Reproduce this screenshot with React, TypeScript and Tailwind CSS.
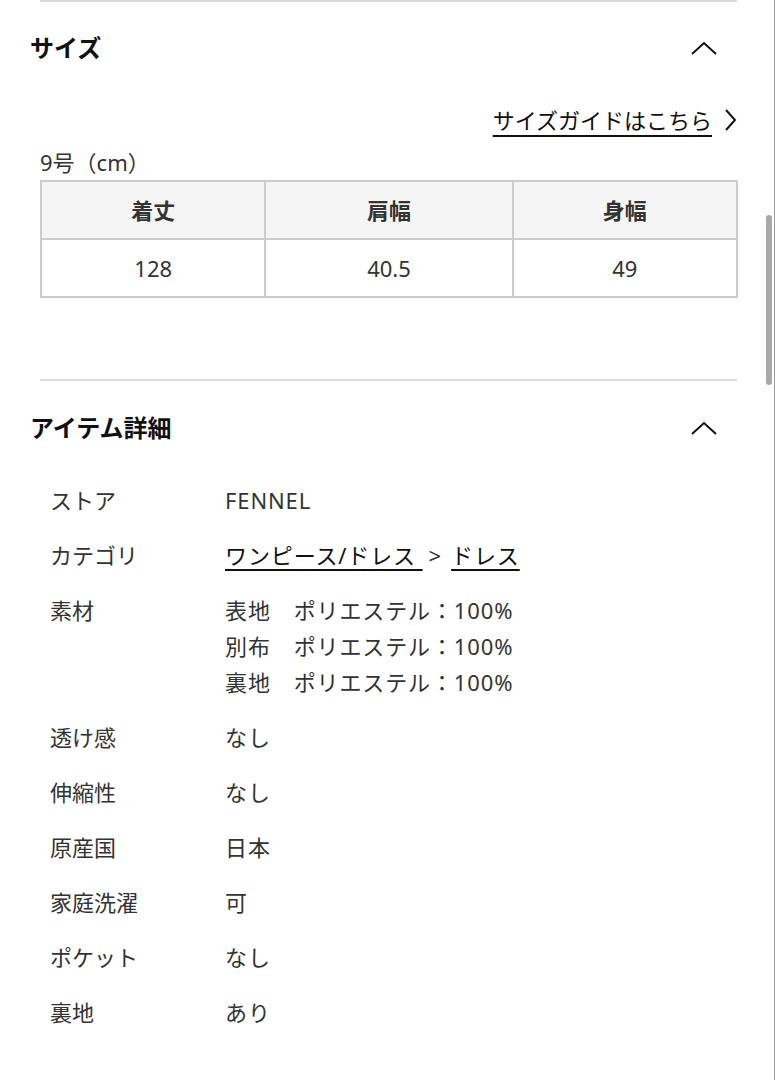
import React from 'react';

const ChevronUp = () => (
  <svg width="26" height="14" viewBox="0 0 26 14" fill="none" stroke="#111" strokeWidth="2">
    <polyline points="1,13 13,2 25,13" />
  </svg>
);

const ChevronRight = () => (
  <svg width="13" height="22" viewBox="0 0 13 22" fill="none" stroke="#111" strokeWidth="2">
    <polyline points="2,1 11,11 2,21" />
  </svg>
);

type Row = { label: string; values: React.ReactNode[] };

const rows: Row[] = [
  { label: 'ストア', values: ['FENNEL'] },
  {
    label: 'カテゴリ',
    values: [
      <span key="c">
        <a className="underline decoration-2 underline-offset-[5px] text-[#111]">ワンピース/ドレス </a>
        <span className="ml-[6px] mr-[9px]">&gt;</span>
        <a className="underline decoration-2 underline-offset-[5px] text-[#111]">ドレス</a>
      </span>,
    ],
  },
  {
    label: '素材',
    values: ['表地　ポリエステル：100%', '別布　ポリエステル：100%', '裏地　ポリエステル：100%'],
  },
  { label: '透け感', values: ['なし'] },
  { label: '伸縮性', values: ['なし'] },
  { label: '原産国', values: ['日本'] },
  { label: '家庭洗濯', values: ['可'] },
  { label: 'ポケット', values: ['なし'] },
  { label: '裏地', values: ['あり'] },
];

export default function App() {
  return (
    <div
      className="relative w-[775px] h-[1080px] overflow-hidden bg-white border-r border-[#9a9a9a] text-[#333]"
      style={{ fontFamily: '"Noto Sans", "Noto Sans CJK JP", sans-serif' }}
    >
      {/* size section */}
      <div className="ml-[40px] mr-[37px] h-[2px] bg-[#dcdcdc]" />
      <div className="h-[92px] flex items-center justify-between pl-[30px] pr-[57px]">
        <h2 className="text-[24px] font-bold text-[#111] leading-none">サイズ</h2>
        <ChevronUp />
      </div>
      <div className="mt-[12px] h-[28px] flex items-center justify-end pr-[37px] text-[22px] text-[#111]">
        <a className="underline decoration-2 underline-offset-[6px] leading-none">サイズガイドはこちら</a>
        <span className="ml-[12px] flex items-center">
          <ChevronRight />
        </span>
      </div>
      <div className="mt-[14px] pl-[40px] text-[22px] leading-[28px]">9号（cm）</div>
      <table className="mt-[4px] ml-[40px] w-[698px] border-collapse border-2 border-[#cccccc] text-[22px] text-center">
        <colgroup>
          <col className="w-[225px]" />
          <col className="w-[248px]" />
          <col className="w-[225px]" />
        </colgroup>
        <thead>
          <tr className="h-[58px] bg-[#f5f5f5]">
            {['着丈', '肩幅', '身幅'].map((h) => (
              <th key={h} className="border-2 border-[#cccccc] font-bold text-[#333]">
                {h}
              </th>
            ))}
          </tr>
        </thead>
        <tbody>
          <tr className="h-[58px]">
            {['128', '40.5', '49'].map((v) => (
              <td key={v} className="border-2 border-[#cccccc]">
                {v}
              </td>
            ))}
          </tr>
        </tbody>
      </table>

      {/* item detail section */}
      <div className="mt-[81px] ml-[40px] mr-[37px] h-[2px] bg-[#dcdcdc]" />
      <div className="h-[94px] flex items-center justify-between pl-[30px] pr-[57px]">
        <h2 className="text-[24px] font-bold text-[#111] leading-none">アイテム詳細</h2>
        <ChevronUp />
      </div>
      <dl className="mt-[7px] pl-[50px] flex flex-col gap-[19px] text-[22px]">
        {rows.map((r) => (
          <div key={r.label} className="flex">
            <dt className="w-[175px] shrink-0 leading-[36px]">{r.label}</dt>
            <dd className="flex flex-col tracking-[0.04em]">
              {r.values.map((v, i) => (
                <span key={i} className="leading-[36px] whitespace-pre">
                  {v}
                </span>
              ))}
            </dd>
          </div>
        ))}
      </dl>

      {/* scrollbar thumb */}
      <div className="absolute left-[766px] top-[215px] w-[6px] h-[170px] rounded-full bg-[#a9a9a9]" />
    </div>
  );
}
